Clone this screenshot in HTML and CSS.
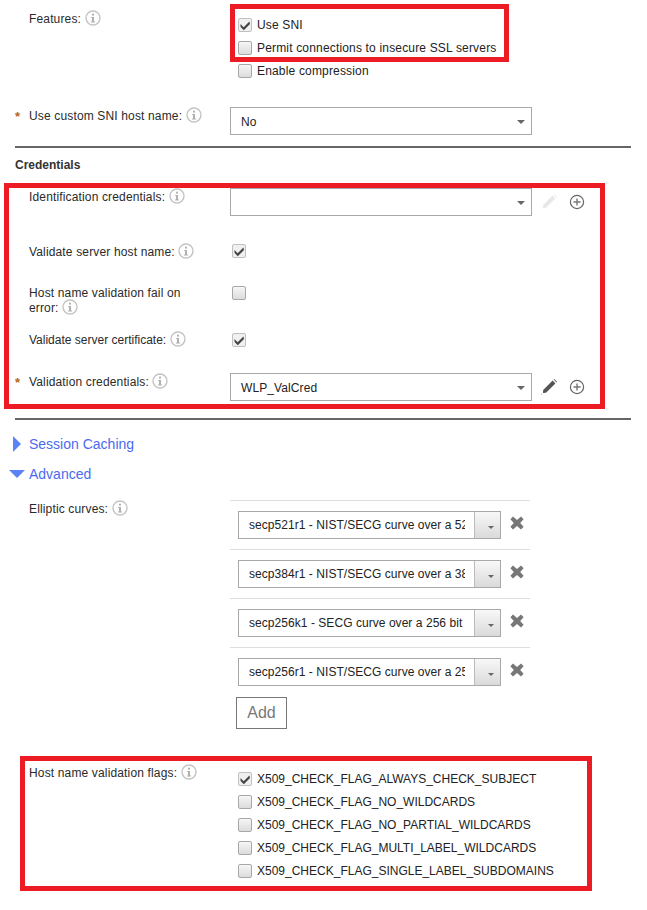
FILE: index.html
```html
<!DOCTYPE html>
<html lang="en">
<head>
<meta charset="utf-8">
<title>SSL client profile</title>
<link rel="stylesheet" href="styles.css">
</head>
<body>
<svg class="defs" width="0" height="0" aria-hidden="true">
  <symbol id="info" viewBox="0 0 16 16">
    <circle cx="8" cy="8" r="7" fill="#fff" stroke="#c4c4c4" stroke-width="1.4"/>
    <circle cx="8" cy="4.7" r="1.1" fill="#b0b0b0"/>
    <path d="M6.2 6.9H9v4.6h1.1v1H5.9v-1H7V7.9H6.2z" fill="#b0b0b0"/>
  </symbol>
  <symbol id="check" viewBox="0 0 14 14">
    <path d="M2.4 6 5.7 9.2 11.4 3.6 12 6 5.8 12.2 2.6 9z" fill="#444"/>
  </symbol>
  <symbol id="pencil" viewBox="0 0 18 18">
    <path d="M12.6 2.6 15.4 5.4 6 14.8 2.9 15.1 3.2 12z" fill="currentColor"/>
    <path d="M13.6 1.6 14.2 1 17 3.8 16.4 4.4z" fill="currentColor"/>
    <path d="M1 17l1-1.4.4.4z" fill="currentColor"/>
  </symbol>
  <symbol id="plus" viewBox="0 0 16 16">
    <circle cx="8" cy="8" r="6.6" fill="none" stroke="#666" stroke-width="1.2"/>
    <path d="M8 4.4v7.2M4.4 8h7.2" stroke="#777" stroke-width="1.4"/>
  </symbol>
  <symbol id="cross" viewBox="0 0 14 14">
    <path d="M3 .6 7 4 11 .6 13.6 3.2 10.2 7 13.6 10.8 11 13.4 7 10 3 13.4 .4 10.8 3.8 7 .4 3.2z" fill="#777"/>
  </symbol>
</svg>

<main class="page">
  <section class="row row-features">
    <span class="star"></span>
    <div class="label">Features: <svg class="info"><use href="#info"/></svg></div>
    <div class="checks checks-features">
      <label class="check-line"><span class="box on"><svg><use href="#check"/></svg></span>Use SNI</label>
      <label class="check-line"><span class="box"></span>Permit connections to insecure SSL servers</label>
      <label class="check-line"><span class="box"></span>Enable compression</label>
    </div>
  </section>

  <section class="row row-select">
    <span class="star">*</span>
    <div class="label">Use custom SNI host name: <svg class="info"><use href="#info"/></svg></div>
    <div class="control"><div class="select">No<span class="caret"></span></div></div>
  </section>

  <hr class="rule rule-one">
  <h2 class="heading">Credentials</h2>

  <section class="row row-select row-ident">
    <span class="star"></span>
    <div class="label">Identification credentials: <svg class="info"><use href="#info"/></svg></div>
    <div class="control">
      <div class="select"><span class="caret"></span></div>
      <svg class="pencil faded"><use href="#pencil"/></svg>
      <svg class="plus"><use href="#plus"/></svg>
    </div>
  </section>

  <section class="row row-host">
    <span class="star"></span>
    <div class="label">Validate server host name: <svg class="info"><use href="#info"/></svg></div>
    <span class="box box-solo on"><svg><use href="#check"/></svg></span>
  </section>

  <section class="row row-fail">
    <span class="star"></span>
    <div class="label label-wrap">Host name validation fail on error: <svg class="info"><use href="#info"/></svg></div>
    <span class="box box-solo"></span>
  </section>

  <section class="row row-cert">
    <span class="star"></span>
    <div class="label">Validate server certificate: <svg class="info"><use href="#info"/></svg></div>
    <span class="box box-solo on"><svg><use href="#check"/></svg></span>
  </section>

  <section class="row row-select row-valid">
    <span class="star">*</span>
    <div class="label">Validation credentials: <svg class="info"><use href="#info"/></svg></div>
    <div class="control">
      <div class="select">WLP_ValCred<span class="caret"></span></div>
      <svg class="pencil"><use href="#pencil"/></svg>
      <svg class="plus"><use href="#plus"/></svg>
    </div>
  </section>

  <hr class="rule rule-two">

  <div class="twisty twisty-session"><span class="tri-right"></span>Session Caching</div>
  <div class="twisty twisty-advanced"><span class="tri-down"></span>Advanced</div>

  <section class="row row-curves">
    <span class="star"></span>
    <div class="label">Elliptic curves: <svg class="info"><use href="#info"/></svg></div>
    <div class="curves">
      <div class="curve">
        <div class="combo"><span class="combo-text">secp521r1 - NIST/SECG curve over a 521 bit prime field</span><span class="combo-btn"><span class="caret"></span></span></div>
        <svg class="cross"><use href="#cross"/></svg>
      </div>
      <div class="curve">
        <div class="combo"><span class="combo-text">secp384r1 - NIST/SECG curve over a 384 bit prime field</span><span class="combo-btn"><span class="caret"></span></span></div>
        <svg class="cross"><use href="#cross"/></svg>
      </div>
      <div class="curve">
        <div class="combo"><span class="combo-text">secp256k1 - SECG curve over a 256 bit prime field</span><span class="combo-btn"><span class="caret"></span></span></div>
        <svg class="cross"><use href="#cross"/></svg>
      </div>
      <div class="curve">
        <div class="combo"><span class="combo-text">secp256r1 - NIST/SECG curve over a 256 bit prime field</span><span class="combo-btn"><span class="caret"></span></span></div>
        <svg class="cross"><use href="#cross"/></svg>
      </div>
      <button class="add" type="button">Add</button>
    </div>
  </section>

  <section class="row row-flags">
    <span class="star"></span>
    <div class="label">Host name validation flags: <svg class="info"><use href="#info"/></svg></div>
    <div class="checks checks-flags">
      <label class="check-line"><span class="box on"><svg><use href="#check"/></svg></span>X509_CHECK_FLAG_ALWAYS_CHECK_SUBJECT</label>
      <label class="check-line"><span class="box"></span>X509_CHECK_FLAG_NO_WILDCARDS</label>
      <label class="check-line"><span class="box"></span>X509_CHECK_FLAG_NO_PARTIAL_WILDCARDS</label>
      <label class="check-line"><span class="box"></span>X509_CHECK_FLAG_MULTI_LABEL_WILDCARDS</label>
      <label class="check-line"><span class="box"></span>X509_CHECK_FLAG_SINGLE_LABEL_SUBDOMAINS</label>
    </div>
  </section>

  <div class="mark mark-features"></div>
  <div class="mark mark-credentials"></div>
  <div class="mark mark-flags"></div>
</main>
</body>
</html>
```

FILE: styles.css
```css
* { box-sizing: border-box; }
html, body { margin: 0; padding: 0; background: #fff; overflow: hidden; }
body {
  font-family: "Liberation Sans", Arial, sans-serif;
  font-size: 12px;
  line-height: 14px;
  color: #222;
  height: 910px;
  letter-spacing: .15px;
}
.defs { position: absolute; }
.page { position: relative; width: 647px; height: 910px; padding: 0 16px 0 15px; }

.row { display: grid; grid-template-columns: 14px 201px 1fr; }
.star { color: #b4651d; font-weight: bold; font-size: 13px; padding-top: 3px; }
.label { padding-top: 2px; color: #2a2a2a; }
.info { width: 16px; height: 16px; vertical-align: -3px; margin: -2px 0 0 0; }

.row-features { height: 107px; padding-top: 13px; }
.row-features .label { margin-top: -3px; }
.row-select { height: 28px; }

.checks { padding-left: 8px; }
.check-line { display: flex; align-items: center; gap: 5px; height: 23px; }
.checks-features { letter-spacing: .17px; }

.box {
  display: block; flex: none; position: relative;
  width: 14px; height: 14px;
  border: 1px solid #a8a8a8; border-radius: 2px;
  background: linear-gradient(#f6f6f6, #dcdcdc);
}
.box.on { background: #f0f0f0; border-color: #c0c0c0; }
.box svg { display: block; position: absolute; left: -1px; top: -1px; width: 14px; height: 14px; }
.box-solo { margin-left: 2px; }

.control { display: flex; align-items: center; }
.select {
  position: relative; width: 302px; height: 28px;
  border: 1px solid #a9a9a9; background: #fff;
  padding: 7px 10px 0; line-height: 14px; letter-spacing: .1px;
}
.caret {
  position: absolute; right: 6px; top: 12px;
  border-left: 4px solid transparent; border-right: 4px solid transparent;
  border-top: 4px solid #666;
}
.pencil { width: 18px; height: 18px; margin-left: 8px; color: #555; }
.pencil.faded { color: #e8e8e8; }
.plus { width: 16px; height: 16px; margin-left: 11px; }

.rule { border: 0; height: 2px; background: #666; margin: 0; }
.rule-one { margin-top: 11px; }
.heading { margin: 10px 0 0; font-size: 12px; line-height: 14px; font-weight: bold; color: #333; letter-spacing: 0; }

.row-ident { margin-top: 16px; }
.row-host { margin-top: 28px; height: 14px; }
.row-host .label { padding-top: 1px; }
.row-fail { margin-top: 28px; height: 28px; }
.row-fail .label { padding-top: 0; line-height: 15px; }
.label-wrap { width: 170px; }
.row-cert { margin-top: 19px; height: 14px; }
.row-cert .label { padding-top: 0; letter-spacing: 0; }
.row-valid { margin-top: 26px; }
.rule-two { margin-top: 17px; }

.twisty { position: relative; color: #4a6bf0; font-size: 14px; line-height: 16px; padding-left: 14px; letter-spacing: 0; }
.twisty-session { margin-top: 16px; }
.twisty-advanced { margin-top: 14px; }
.tri-right {
  position: absolute; left: -2px; top: 0;
  border-top: 8px solid transparent; border-bottom: 8px solid transparent;
  border-left: 8px solid #5b83f5;
}
.tri-down {
  position: absolute; left: -6px; top: 4px;
  border-left: 8px solid transparent; border-right: 8px solid transparent;
  border-top: 8px solid #5b83f5;
}

.row-curves { margin-top: 18px; height: 246px; }
.curve {
  display: flex; align-items: flex-start;
  width: 300px; height: 49px;
  border-top: 1px solid #ddd;
  padding: 10px 0 0 8px;
}
.combo { display: flex; width: 263px; height: 28px; border: 1px solid #a9a9a9; background: #fff; }
.combo-text { flex: 1; overflow: hidden; white-space: nowrap; padding: 6px 0 0 10px; margin-right: 9px; letter-spacing: .05px; }
.combo-btn { position: relative; flex: none; width: 26px; border-left: 1px solid #bbb; background: linear-gradient(#f8f8f8, #dadada); }
.combo-btn .caret { right: 6px; top: 14px; border-left-width: 3px; border-right-width: 3px; border-top-width: 3px; border-top-color: #666; }
.cross { width: 14px; height: 14px; margin: 5px 0 0 9px; }
.add {
  display: block; width: 51px; height: 32px; margin: 1px 0 0 6px; padding: 0;
  font: 16px/30px "Liberation Sans", Arial, sans-serif; color: #777;
  background: #fff; border: 1px solid #777; border-radius: 0;
}

.row-flags { margin-top: 18px; }
.checks-flags { padding-top: 3px; letter-spacing: 0; }

.mark { position: absolute; border: 5px solid #ed1c24; pointer-events: none; }
.mark-features { left: 230px; top: 4px; width: 279px; height: 58px; }
.mark-credentials { left: 4px; top: 183px; width: 601px; height: 226px; }
.mark-flags { left: 20px; top: 756px; width: 572px; height: 135px; }
```
